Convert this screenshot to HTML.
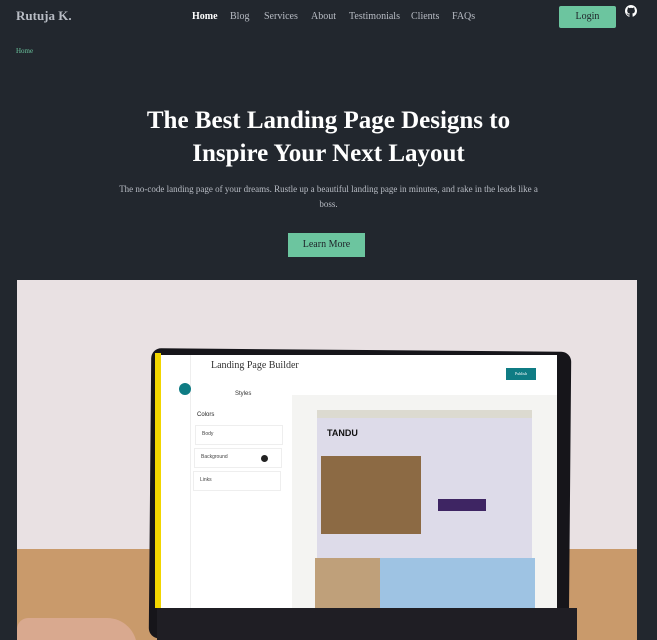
<!DOCTYPE html>
<html><head><meta charset="utf-8"><style>
*{margin:0;padding:0;box-sizing:border-box}
body{width:657px;height:640px;background:#22272e;font-family:"Liberation Serif",serif;overflow:hidden;position:relative;color:#fff}
.a{position:absolute}
.nav a{position:absolute;top:11px;font-size:10px;color:#b8bcc4;text-decoration:none}
.btn{color:#1e2228 !important}
</style></head><body>
<div class="a" style="left:16px;top:8px;font-size:13px;font-weight:bold;color:#b8bcc4">Rutuja K.</div>
<div class="nav">
<a style="left:192px;color:#fff;font-weight:bold">Home</a>
<a style="left:230px">Blog</a>
<a style="left:264px">Services</a>
<a style="left:311px">About</a>
<a style="left:349px">Testimonials</a>
<a style="left:411px">Clients</a>
<a style="left:452px">FAQs</a>
</div>
<div class="a btn" style="left:559px;top:6px;width:57px;height:22px;background:#6cc59f;border-radius:2px;font-size:10px;text-align:center;line-height:22px">Login</div>
<svg class="a" style="left:625px;top:5px" width="12" height="12" viewBox="0 0 16 16"><path fill="#fff" d="M8 0C3.6 0 0 3.6 0 8c0 3.5 2.3 6.5 5.5 7.6.4.1.5-.2.5-.4v-1.4c-2.2.5-2.7-1-2.7-1-.4-.9-.9-1.2-.9-1.2-.7-.5.1-.5.1-.5.8.1 1.2.8 1.2.8.7 1.3 1.900.9 2.4.7.1-.5.3-.9.5-1.100-1.8-.2-3.600-.9-3.600-4 0-.9.3-1.600.8-2.100-.1-.2-.4-1 .1-2.100 0 0 .7-.2 2.200.8.600-.2 1.300-.3 2-.3s1.400.1 2 .3c1.500-1 2.200-.8 2.200-.8.400 1.100.200 1.900.100 2.100.500.600.800 1.300.800 2.100 0 3.100-1.900 3.700-3.600 3.900.300.300.500.800.500 1.500v2.200c0 .2.100.5.600.4C13.700 14.500 16 11.500 16 8c0-4.400-3.600-8-8-8z"/></svg>
<div class="a" style="left:16px;top:47px;font-size:7px;color:#6cc59f">Home</div>
<div class="a" style="left:0;top:104px;width:657px;text-align:center;font-size:25px;font-weight:bold;line-height:33px;color:#fff">The Best Landing Page Designs to<br>Inspire Your Next Layout</div>
<div class="a" style="left:110px;top:182px;width:437px;text-align:center;font-size:9px;line-height:15px;color:#b8bcc4">The no-code landing page of your dreams. Rustle up a beautiful landing page in minutes, and rake in the leads like a boss.</div>
<div class="a btn" style="left:288px;top:233px;width:77px;height:24px;background:#6cc59f;font-size:10px;text-align:center;line-height:24px">Learn More</div>
<div class="a" style="left:17px;top:280px;width:620px;height:360px;background:#e9e1e3;overflow:hidden">
 <div class="a" style="left:0;top:269px;width:620px;height:91px;background:#c99a6b"></div>
 <div class="a" style="left:133px;top:70px;width:420px;height:290px;background:#16151a;border-radius:10px;transform:rotate(0.5deg)"></div>
 <div class="a" style="left:138px;top:73px;width:6px;height:255px;background:#f2d600"></div>
 <div class="a" style="left:144px;top:75px;width:396px;height:253px;background:#fff"></div>
 <div class="a" style="left:144px;top:75px;width:30px;height:253px;background:#fff;border-right:1px solid #eee"></div>
 <div class="a" style="left:162px;top:103px;width:12px;height:12px;border-radius:50%;background:#0f7c84"></div>
 <div class="a" style="left:194px;top:80px;font-size:10px;color:#333">Landing Page Builder</div>
 <div class="a" style="left:489px;top:88px;width:30px;height:12px;background:#0f7c84;color:#fff;font-size:4px;text-align:center;line-height:12px">Publish</div>
 <div class="a" style="left:218px;top:111px;font-size:6px;color:#333;font-family:'Liberation Sans'">Styles</div>
 <div class="a" style="left:180px;top:132px;font-size:6px;color:#222;font-family:'Liberation Sans'">Colors</div>
 <div class="a" style="left:178px;top:145px;width:88px;height:20px;border:1px solid #eee;font-size:5px;color:#444;padding:5px 6px;font-family:'Liberation Sans'">Body</div>
 <div class="a" style="left:177px;top:168px;width:88px;height:20px;border:1px solid #eee;font-size:5px;color:#444;padding:5px 6px;font-family:'Liberation Sans'">Background</div>
 <div class="a" style="left:244px;top:175px;width:7px;height:7px;border-radius:50%;background:#222"></div>
 <div class="a" style="left:176px;top:191px;width:88px;height:20px;border:1px solid #eee;font-size:5px;color:#444;padding:5px 6px;font-family:'Liberation Sans'">Links</div>
 <div class="a" style="left:275px;top:115px;width:265px;height:213px;background:#f4f4f2"></div>
 <div class="a" style="left:300px;top:130px;width:215px;height:8px;background:#dcdad0"></div>
 <div class="a" style="left:300px;top:138px;width:215px;height:140px;background:#dddbe9"></div>
 <div class="a" style="left:310px;top:148px;font-size:9px;font-weight:bold;color:#111;font-family:'Liberation Sans'">TANDU</div>
 <div class="a" style="left:304px;top:176px;width:100px;height:78px;background:#8c6a44"></div>
 <div class="a" style="left:421px;top:219px;width:48px;height:12px;background:#3e2563"></div>
 <div class="a" style="left:298px;top:278px;width:220px;height:50px;background:#9ec3e3"></div>
 <div class="a" style="left:298px;top:278px;width:65px;height:50px;background:#bfa07a"></div>
 <div class="a" style="left:140px;top:328px;width:420px;height:32px;background:#1f1e24"></div>
 <div class="a" style="left:0;top:338px;width:120px;height:30px;background:#d9a98f;border-radius:15px 40px 0 0"></div>
</div>
</body></html>
